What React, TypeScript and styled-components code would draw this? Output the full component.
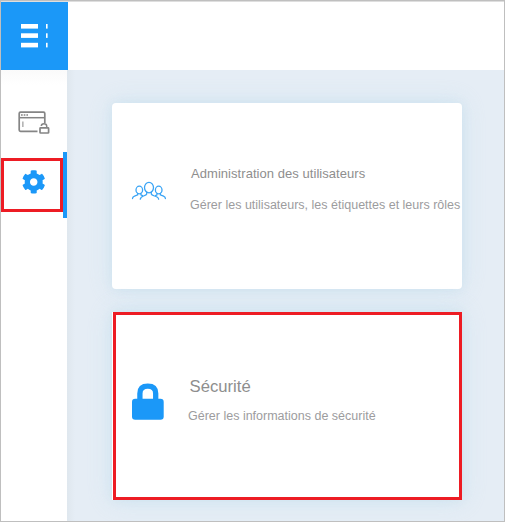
import React from "react";
import styled, { createGlobalStyle } from "styled-components";

const GlobalStyle = createGlobalStyle`
  * { box-sizing: border-box; }
  body { margin: 0; background: #fff; font-family: "Liberation Sans", Arial, sans-serif; }
`;

const Frame = styled.div`
  width: 505px;
  height: 522px;
  border: 1px solid #bfbfbf;
  display: flex;
  flex-direction: column;
  overflow: hidden;
`;

const Header = styled.header`
  flex: 0 0 69px;
  display: flex;
  background: #fff;
  border-top: 1px solid #dedede;
`;

const Logo = styled.div`
  width: 67px;
  height: 68px;
  background: #1b98f8;
  svg { display: block; }
`;

const Body = styled.div`
  flex: 1;
  display: flex;
  min-height: 0;
`;

const Sidebar = styled.nav`
  flex: 0 0 66px;
  display: flex;
  flex-direction: column;
  background: linear-gradient(#fafafa, #fff 15px);
`;

const NavItem = styled.div<{ $height: number }>`
  height: ${(p) => p.$height}px;
  display: flex;
  svg { display: block; flex: none; }
`;

const ActiveItem = styled(NavItem)`
  border-right: 4px solid #1b98f8;
  align-items: flex-start;
  padding-top: 6px;
`;

const Highlight = styled.div`
  width: 62px;
  height: 54px;
  border: 3px solid #ed1c24;
`;

const Content = styled.main`
  flex: 1;
  display: flex;
  flex-direction: column;
  align-items: flex-start;
  gap: 23px;
  padding: 33px 0 0 45px;
  background: linear-gradient(90deg, #dfe7ee, #e5edf5 8px);
`;

const Card = styled.section<{ $height: number }>`
  width: 350px;
  height: ${(p) => p.$height}px;
  flex: none;
  display: flex;
  background: #fff;
  border-radius: 4px;
  box-shadow: 0 0 23px rgba(190, 224, 241, 0.45), 0 0 10px rgba(175, 208, 226, 0.3);
`;

const MarkedCard = styled(Card)`
  border-radius: 0;
  padding-left: 1px;
`;

const Outline = styled.div`
  flex: 1;
  display: flex;
  border: 3px solid #ed1c24;
`;

const IconCell = styled.div<{ $width: number; $left: number; $top: number }>`
  flex: 0 0 ${(p) => p.$width}px;
  padding: ${(p) => p.$top}px 0 0 ${(p) => p.$left}px;
  svg { display: block; }
`;

const Texts = styled.div<{ $top: number }>`
  padding-top: ${(p) => p.$top}px;
  white-space: nowrap;
`;

const Title = styled.h2<{ $size: number; $spacing: number; $indent: number }>`
  margin: 0 0 0 ${(p) => p.$indent}px;
  font-size: ${(p) => p.$size}px;
  font-weight: 400;
  line-height: 20px;
  letter-spacing: ${(p) => p.$spacing}px;
  color: #8e8e8e;
`;

const Description = styled.p<{ $gap: number }>`
  margin: ${(p) => p.$gap}px 0 0;
  font-size: 12.5px;
  line-height: 20px;
  color: #9c9c9e;
`;

const LogoMark = () => (
  <svg width="67" height="68" viewBox="1 2 67 68" fill="#fff">
    {[24, 33.3, 42.8].map((y) => (
      <g key={y}>
        <rect x="21" y={y} width="17" height="4.6" />
        <rect x="46" y={y} width="1.6" height="4.6" />
      </g>
    ))}
  </svg>
);

const BrowserLock = () => (
  <svg width="66" height="82" viewBox="1 70 66 82" fill="none" stroke="#858585">
    <path d="M37.5 131.3H20.5Q19.2 131.3 19.2 130V113.5Q19.2 112.2 20.5 112.2H43.5Q44.8 112.2 44.8 113.5V123" strokeWidth="1.7" />
    <path d="M19.5 117.7H44.5" strokeWidth="1.5" />
    <path d="M21 115H28" strokeWidth="1.5" strokeDasharray="1.7 1" />
    <path d="M22.9 121.5V127" strokeWidth="1" />
    <rect x="40" y="127.8" width="8.6" height="5.2" rx="0.6" strokeWidth="1.7" />
    <path d="M41.3 126Q41.3 123.7 44 123.7Q46.7 123.7 46.7 126V128" strokeWidth="1.5" />
  </svg>
);

const Gear = () => (
  <svg width="56" height="48" viewBox="4 161 56 48">
    <g transform="translate(21.7 169.9) scale(0.0469)">
      <path
        fill="#1b98f8"
        d="M487.400 315.700l-42.600-24.600c4.300-23.200 4.300-47 0-70.200l42.600-24.600c4.900-2.800 7.100-8.600 5.500-14-11.100-35.600-30-67.800-54.700-94.600-3.800-4.100-10-5.100-14.800-2.300L380.800 110c-17.900-15.400-38.500-27.300-60.800-35.100V25.800c0-5.600-3.900-10.500-9.400-11.700-36.700-8.200-74.300-7.800-109.200 0-5.500 1.200-9.400 6.100-9.400 11.700V75c-22.200 7.900-42.800 19.800-60.800 35.100L88.700 85.500c-4.900-2.800-11-1.900-14.800 2.300-24.700 26.700-43.600 58.900-54.700 94.600-1.700 5.400.6 11.200 5.500 14L67.300 221c-4.300 23.200-4.300 47 0 70.200l-42.600 24.600c-4.900 2.800-7.100 8.600-5.500 14 11.100 35.600 30 67.800 54.700 94.600 3.800 4.100 10 5.100 14.800 2.300l42.600-24.600c17.900 15.400 38.500 27.300 60.800 35.100v49.200c0 5.600 3.900 10.500 9.400 11.700 36.700 8.200 74.300 7.800 109.200 0 5.500-1.200 9.400-6.100 9.400-11.700v-49.200c22.200-7.900 42.800-19.800 60.800-35.100l42.600 24.600c4.900 2.800 11 1.900 14.800-2.300 24.700-26.700 43.600-58.900 54.700-94.600 1.500-5.500-.7-11.300-5.600-14.100zM256 336c-44.100 0-80-35.900-80-80s35.900-80 80-80 80 35.900 80 80-35.900 80-80 80z"
      />
    </g>
  </svg>
);

const People = () => (
  <svg width="36" height="20" viewBox="131 181 36 20" fill="none" stroke="#3aa4f5" strokeWidth="1.3" strokeLinecap="round">
    <ellipse cx="149" cy="187.6" rx="4.5" ry="5.2" />
    <ellipse cx="139.3" cy="190" rx="3.3" ry="3.8" />
    <ellipse cx="158.7" cy="190" rx="3.3" ry="3.8" />
    <path d="M146.700 192.300V194Q146.500 194.800 143.500 196Q140.300 197.200 140.300 199.200M151.300 192.300V194Q151.500 194.800 154.500 196Q158.600 197.200 158.600 199.200" />
    <path d="M137.700 193.500V194.800L134.500 196.200Q132.500 197 132.500 198.500M140.900 193.500V194.800L142.500 195.600M160.300 193.500V194.800L163.500 196.200Q165.400 197 165.400 198.500M157 193.500V194.800L155.500 195.600" />
  </svg>
);

const Lock = () => (
  <svg width="34" height="38" viewBox="131 383 34 38">
    <path d="M139.9 400V393.500Q139.9 386.200 147.800 386.200Q155.700 386.200 155.700 393.500V400" fill="none" stroke="#1b98f8" strokeWidth="5.300" />
    <rect x="132" y="398.800" width="31.700" height="20.900" rx="3.200" fill="#1b98f8" />
  </svg>
);

export default function App() {
  return (
    <>
      <GlobalStyle />
      <Frame>
        <Header>
          <Logo><LogoMark /></Logo>
        </Header>
        <Body>
          <Sidebar>
            <NavItem $height={82}><BrowserLock /></NavItem>
            <ActiveItem $height={66}>
              <Highlight><Gear /></Highlight>
            </ActiveItem>
          </Sidebar>
          <Content>
            <Card $height={186}>
              <IconCell $width={78} $left={19} $top={78}><People /></IconCell>
              <Texts $top={61}>
                <Title $size={13} $spacing={0.05} $indent={1}>Administration des utilisateurs</Title>
                <Description $gap={11}>Gérer les utilisateurs, les étiquettes et leurs rôles</Description>
              </Texts>
            </Card>
            <MarkedCard $height={188}>
              <Outline>
                <IconCell $width={72} $left={15} $top={68}><Lock /></IconCell>
                <Texts $top={62}>
                  <Title $size={16.7} $spacing={0} $indent={1.5}>Sécurité</Title>
                  <Description $gap={9}>Gérer les informations de sécurité</Description>
                </Texts>
              </Outline>
            </MarkedCard>
          </Content>
        </Body>
      </Frame>
    </>
  );
}
